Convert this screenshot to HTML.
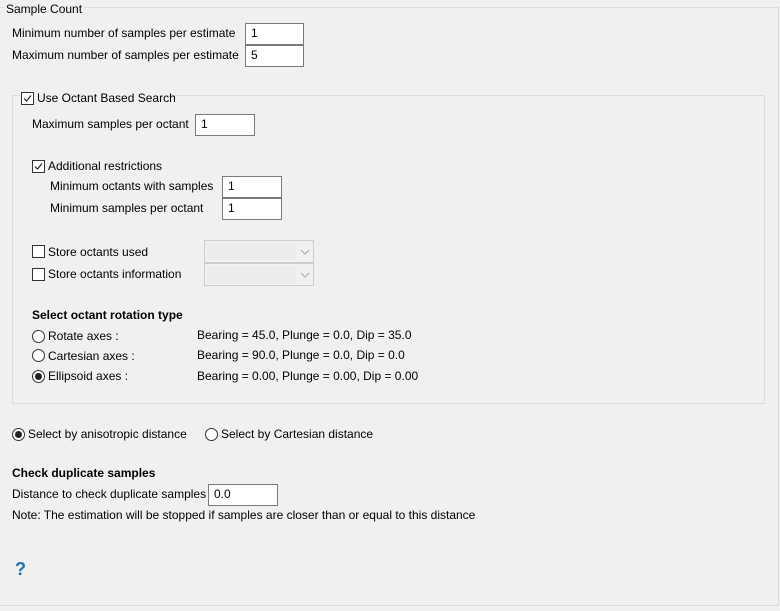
<!DOCTYPE html>
<html><head><style>
body{margin:0;width:780px;height:611px;background:#f0f0f0;font-family:"Liberation Sans",sans-serif;font-size:12px;color:#000;position:relative;overflow:hidden}
.a{position:absolute;white-space:nowrap;line-height:14px}
.box{position:absolute;border:1px solid #dcdcdc}
.in{position:absolute;background:#fff;border:1px solid #7a7a7a;box-sizing:border-box;padding-left:5px;line-height:19px}
.cb{position:absolute;width:13px;height:13px;box-sizing:border-box;border:1px solid #333;background:#fff}
.rd{position:absolute;width:13px;height:13px;box-sizing:border-box;border:1px solid #333;border-radius:50%;background:#fff}
.rd.on::after{content:"";position:absolute;left:2px;top:2px;width:7px;height:7px;border-radius:50%;background:#222}
.cmb{position:absolute;border:1px solid #ccc;background:#f0f0f0;box-sizing:border-box}
.cmb i{position:absolute;left:2px;top:2px;right:17px;bottom:2px;background:#ececec}
.b{font-weight:bold}
</style></head><body>
<div class="box" style="left:-1px;top:7px;width:778px;height:597px"></div>
<div class="a" style="left:4px;top:2px;background:#f0f0f0;padding:0 2px">Sample Count</div>
<div class="a" style="left:12px;top:26px">Minimum number of samples per estimate</div>
<div class="in" style="left:245px;top:23px;width:59px;height:22px">1</div>
<div class="a" style="left:12px;top:48px">Maximum number of samples per estimate</div>
<div class="in" style="left:245px;top:45px;width:59px;height:22px">5</div>

<div class="box" style="left:12px;top:95px;width:751px;height:307px"></div>
<div class="a" style="left:19px;top:90px;width:150px;height:16px;background:#f0f0f0"></div>
<div class="cb" style="left:21px;top:92px"><svg width="11" height="11" style="position:absolute;left:0;top:0"><path d="M2 5.5 L4.5 8 L9 2.5" stroke="#222" stroke-width="1.2" fill="none"/></svg></div>
<div class="a" style="left:37px;top:91px">Use Octant Based Search</div>
<div class="a" style="left:32px;top:117px">Maximum samples per octant</div>
<div class="in" style="left:195px;top:114px;width:60px;height:22px">1</div>
<div class="cb" style="left:32px;top:160px"><svg width="11" height="11" style="position:absolute;left:0;top:0"><path d="M2 5.5 L4.5 8 L9 2.5" stroke="#222" stroke-width="1.2" fill="none"/></svg></div>
<div class="a" style="left:48px;top:159px">Additional restrictions</div>
<div class="a" style="left:50px;top:179px">Minimum octants with samples</div>
<div class="in" style="left:222px;top:176px;width:60px;height:22px">1</div>
<div class="a" style="left:50px;top:201px">Minimum samples per octant</div>
<div class="in" style="left:222px;top:198px;width:60px;height:22px">1</div>

<div class="cb" style="left:32px;top:245px"></div>
<div class="a" style="left:48px;top:245px">Store octants used</div>
<div class="cmb" style="left:204px;top:240px;width:110px;height:23px"><i></i><svg width="10" height="6" style="position:absolute;right:3px;top:8px"><path d="M1 1 L5 5 L9 1" stroke="#aaa" fill="none"/></svg></div>
<div class="cb" style="left:32px;top:268px"></div>
<div class="a" style="left:48px;top:267px">Store octants information</div>
<div class="cmb" style="left:204px;top:263px;width:110px;height:23px"><i></i><svg width="10" height="6" style="position:absolute;right:3px;top:8px"><path d="M1 1 L5 5 L9 1" stroke="#aaa" fill="none"/></svg></div>

<div class="a b" style="left:32px;top:308px">Select octant rotation type</div>
<div class="rd" style="left:32px;top:330px"></div>
<div class="a" style="left:48px;top:329px">Rotate axes :</div>
<div class="a" style="left:197px;top:328px">Bearing = 45.0, Plunge = 0.0, Dip = 35.0</div>
<div class="rd" style="left:32px;top:349px"></div>
<div class="a" style="left:48px;top:349px">Cartesian axes :</div>
<div class="a" style="left:197px;top:348px">Bearing = 90.0, Plunge = 0.0, Dip = 0.0</div>
<div class="rd on" style="left:32px;top:370px"></div>
<div class="a" style="left:48px;top:369px">Ellipsoid axes :</div>
<div class="a" style="left:197px;top:369px">Bearing = 0.00, Plunge = 0.00, Dip = 0.00</div>

<div class="rd on" style="left:12px;top:428px"></div>
<div class="a" style="left:28px;top:427px">Select by anisotropic distance</div>
<div class="rd" style="left:205px;top:428px"></div>
<div class="a" style="left:221px;top:427px">Select by Cartesian distance</div>

<div class="a b" style="left:12px;top:466px">Check duplicate samples</div>
<div class="a" style="left:12px;top:487px">Distance to check duplicate samples</div>
<div class="in" style="left:208px;top:484px;width:70px;height:22px">0.0</div>
<div class="a" style="left:12px;top:508px">Note: The estimation will be stopped if samples are closer than or equal to this distance</div>
<div class="a b" style="left:15px;top:560px;font-size:18px;line-height:18px;color:#1a74b0">?</div>
</body></html>
